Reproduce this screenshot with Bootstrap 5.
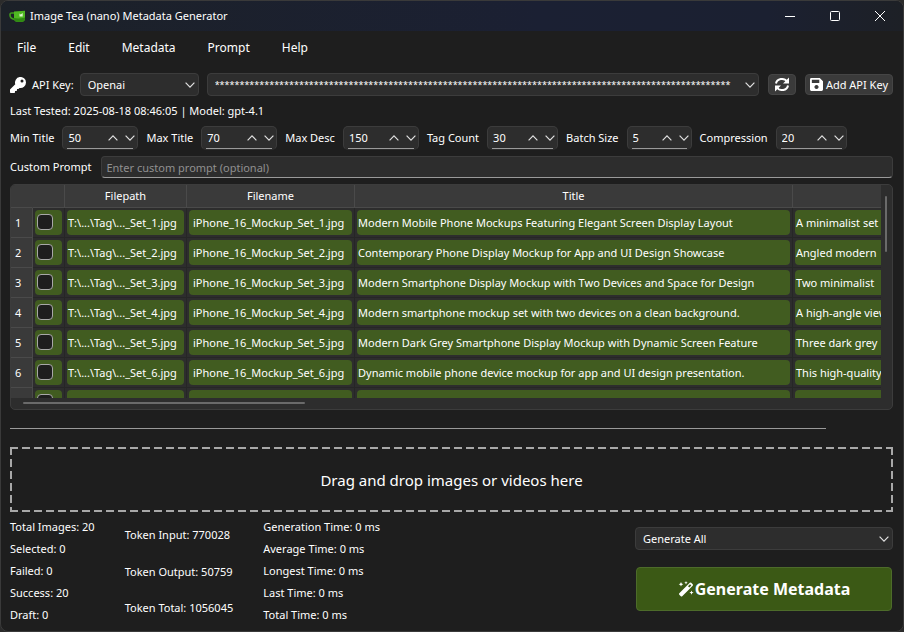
<!DOCTYPE html>
<html lang="en" data-bs-theme="dark">
<head>
<meta charset="utf-8">
<meta name="viewport" content="width=device-width, initial-scale=1">
<title>Image Tea (nano) Metadata Generator</title>
<link href="https://cdn.jsdelivr.net/npm/bootstrap@5.3.0/dist/css/bootstrap.min.css" rel="stylesheet">
<style>
  :root {
    --win: #1e1e1e;
    --field: #2d2d2d;
    --edge: #3c3c3c;
    --head: #3a3a3a;
    --cell: #415c20;
    --chev: url("data:image/svg+xml,%3Csvg xmlns='http://www.w3.org/2000/svg' viewBox='0 0 10 6' fill='none' stroke='%23e0e0e0' stroke-width='1.2'%3E%3Cpath d='M.6.7 5 5.1 9.4.7'/%3E%3C/svg%3E");
  }
  html { background: #2b2b2b; }
  body { font-family: "Noto Sans", "Open Sans", sans-serif; font-size: 11px; line-height: 16px; color: #fff; background: transparent; }
  .app-window { min-height: 100vh; background: var(--win); border: 1px solid #3a3a3a; border-radius: 8px; overflow: hidden; }
  .title-bar { height: 30px; padding-left: 8px; background: linear-gradient(90deg, #1c2128, #1b2033 60%, #1b2031 85%, #1d2026); }
  .win-btn { width: 45px; height: 30px; padding: 0 2px 2px 0; border: 0; color: #fff; background: none; }
  .menu-row { height: 33px; padding-left: 16px; gap: 32px; font-size: 12px; }
  .menu-row a { color: #fff; text-decoration: none; }
  .content { padding: 9px 10px 8px 9px; }
  .combo, .combo:focus { height: 23px; padding: 0 20px 0 7px; font-size: 11px; line-height: 16px; color: #fff; border: 1px solid var(--edge); border-radius: 4px; box-shadow: none;
    background: var(--field) var(--chev) no-repeat right 3px center / 10px 6px; }
  .provider { width: 119px; }
  .key-combo, .key-combo:focus { min-width: 0; padding-right: 16px; font-size: 9px; }
  .key-glyph { width: 16px; height: 16px; flex: none; }
  .provider-label { margin: 0 6px; }
  .tool-btn { height: 21px; margin-left: 9px; padding: 0 4px; gap: 3px; font-size: 11px; line-height: 16px; color: #fff; background: #3a3a3a; border: 1px solid #454545; border-radius: 4px; }
  .tool-btn:hover { background: #444; color: #fff; }
  .refresh-btn { width: 28px; }
  .last-test { margin-top: 7px; }
  .spin-row { column-gap: 8px; margin-top: 7px; }
  .spin-set { gap: 8px; }
  .spin { width: 76px; height: 24px; gap: 3px; padding: 0 0 0 5px; border: 1px solid var(--edge); border-radius: 5px; background: linear-gradient(#9a9a9a, #9a9a9a) no-repeat center bottom / calc(100% - 8px) 1px, var(--field); border-bottom-color: transparent; }
  .spin-md { width: 71px; }
  .spin-sm { width: 65px; }
  .spin input { width: 0; flex: 1; padding: 0; border: 0; outline: 0; color: #fff; background: none; appearance: textfield; }
  .spin input::-webkit-inner-spin-button { appearance: none; margin: 0; }
  .spin button { width: 14px; padding: 0 2px; border: 0; background: none; line-height: 0; color: #e0e0e0; }
  .prompt-row { gap: 10px; margin-top: 6px; }
  .prompt-field, .prompt-field:focus { height: 22px; padding: 0 4px; font-size: 11px; color: #fff; border: 1px solid var(--edge); border-bottom: 1px solid #9a9a9a; border-radius: 4px; background: var(--field); box-shadow: none; }
  .prompt-field::placeholder { color: #909090; }
  .grid-frame { margin-top: 6px; border: 1px solid var(--edge); border-radius: 5px; background: var(--field); height: 226px; flex-grow: 1; display: grid; grid-template: 1fr 11px / 1fr 11px; overflow: hidden; }
  .grid-view { overflow: hidden; min-width: 0; min-height: 0; }
  .data-grid { table-layout: fixed; width: 1100px; border-collapse: separate; border-spacing: 0; background: var(--field); }
  .data-grid th { font-weight: 400; text-align: center; background: var(--head); border-right: 1px solid #4a4a4a; border-bottom: 1px solid #4a4a4a; padding: 0; }
  .data-grid thead th { height: 23px; }
  .data-grid thead .no-edge { border-right-color: var(--head); }
  .data-grid tbody th { text-align: left; padding-left: 4px; }
  .data-grid td { height: 30px; padding: 2px; border-right: 1px solid #262626; border-bottom: 1px solid #262626; }
  .fill-cell { height: 25px; border-radius: 4px; background: var(--cell); padding: 5px 1px 4px; line-height: 16px; white-space: nowrap; overflow: hidden; }
  .fill-cell.file-name { padding-left: 4px; }
  .fill-cell.tick-cell { padding: 4px 2px; }
  .row-tick { appearance: none; display: block; width: 16px; height: 16px; margin: 0; border: 1px solid #a8a8a8; border-radius: 4px; background: #1e1e1e; }
  .row-tick:checked { background: #8bc34a; }
  .v-track { padding: 11px 0 0 4px; }
  .v-thumb { width: 2px; height: 56px; border-radius: 1px; background: #6a6a6a; }
  .h-track { padding: 4px 0 0 12px; }
  .h-thumb { width: 282px; height: 2px; border-radius: 1px; background: #6a6a6a; }
  .rule { margin: 18px 67px 18px 0; height: 1px; background: #9a9a9a; }
  .drop-zone { height: 65px; font-size: 15px;
    --dash-x: repeating-linear-gradient(90deg, #a8a8a8 0 8px, transparent 8px 12px);
    --dash-y: repeating-linear-gradient(#a8a8a8 0 8px, transparent 8px 12px);
    background: var(--dash-x) 0 0 / 100% 2px no-repeat, var(--dash-x) 0 100% / 100% 2px no-repeat, var(--dash-y) 0 0 / 2px 100% no-repeat, var(--dash-y) 100% 0 / 2px 100% no-repeat; }
  .stats { padding-top: 7px; }
  .stat-sets { gap: 30px; }
  .stat-list { gap: 6px; }
  .token-list { padding: 8px 0 7px; }
  .actions { width: 258px; padding-top: 8px; }
  .go-btn { height: 44px; margin: 17px 1px 0; font-size: 16px; font-weight: 700; gap: 1px; padding: 0; color: #fff; background: #3b5915; border: 1px solid #4d6b2a; border-radius: 4px; }
  .go-btn:hover { color: #fff; background: #45681a; }
</style>
</head>
<body>
<div class="app-window d-flex flex-column">
  <header class="title-bar d-flex align-items-center">
    <svg width="17" height="13" viewBox="0 0 17 13" class="me-1" aria-hidden="true"><path d="M5.500 3H2.500Q1 3 1 5q0 4 5.500 4.500" fill="none" stroke="#3f9a1c" stroke-width="1.600"/><path d="M5 1.500 16 .8v7.700q0 3-3 3.300H8Q5 11.500 5 8.500z" fill="#4fb822"/><path d="M5 8q5 1 11-.5v1q0 3-3 3.300H8Q5 11.500 5 8.500z" fill="#2f8a12"/><path d="m10.500 3.500 1.200 1 2-1.500v3.500h-3.200z" fill="#dff5cf"/></svg>
    <span class="flex-grow-1">Image Tea (nano) Metadata Generator</span>
    <button class="win-btn" type="button" aria-label="Minimize"><svg width="10" height="10" viewBox="0 0 10 10"><path d="M0 5.500h10" stroke="currentColor"/></svg></button>
    <button class="win-btn" type="button" aria-label="Maximize"><svg width="10" height="10" viewBox="0 0 10 10"><rect x=".5" y=".5" width="9" height="9" rx="1" fill="none" stroke="currentColor"/></svg></button>
    <button class="win-btn" type="button" aria-label="Close"><svg width="10" height="10" viewBox="0 0 10 10"><path d="m0 0 10 10M10 0 0 10" stroke="currentColor"/></svg></button>
  </header>
  <nav class="menu-row d-flex align-items-center">
    <a href="#">File</a><a href="#">Edit</a><a href="#">Metadata</a><a href="#">Prompt</a><a href="#">Help</a>
  </nav>
  <main class="content d-flex flex-column flex-grow-1">
    <div class="d-flex align-items-center text-nowrap">
      <svg class="key-glyph" viewBox="0 0 512 512" fill="#fff" aria-hidden="true"><path d="M512 176a176 176 0 0 1-209 173l-24 27a24 24 0 0 1-18 8h-37v40a24 24 0 0 1-24 24h-40v40a24 24 0 0 1-24 24H24a24 24 0 0 1-24-24v-78a24 24 0 0 1 7-17l162-162A176 176 0 1 1 512 176zM336 128a48 48 0 1 0 96 0 48 48 0 1 0-96 0z"/></svg>
      <label for="provider" class="provider-label flex-shrink-0">API Key:</label>
      <select id="provider" class="form-select combo provider me-2 flex-shrink-0"><option>Openai</option></select>
      <select class="form-select combo key-combo flex-fill w-auto" aria-label="Stored key"><option>********************************************************************************************************</option></select>
      <button class="btn tool-btn refresh-btn flex-shrink-0 d-flex align-items-center justify-content-center" type="button" aria-label="Refresh"><svg width="16" height="15" viewBox="0 0 16 15" fill="none" stroke="#fff" stroke-width="2"><path d="M2 6.500A6 5.500 0 0 1 13 4.500M14 8.500A6 5.500 0 0 1 3 10.500"/><path d="M15 .5v6H9zM1 14.500v-6h6z" fill="#fff" stroke="none"/></svg></button>
      <button class="btn tool-btn flex-shrink-0 d-flex align-items-center" type="button"><svg width="13" height="13" viewBox="0 0 14 14"><path fill="#fff" fill-rule="evenodd" d="M1.500 0H10.500L14 3.500v9q0 1.500-1.500 1.500h-11Q0 14 0 12.500v-11Q0 0 1.500 0zM2 2v3.500h8V2zM7 7.500a2.200 2.200 0 1 0 .01 0z"/></svg>Add API Key</button>
    </div>
    <div class="last-test">Last Tested: 2025-08-18 08:46:05 | Model: gpt-4.1</div>
    <form class="spin-row d-flex flex-wrap" id="limits"></form>
    <div class="prompt-row d-flex align-items-center">
      <label for="prompt" class="text-nowrap">Custom Prompt</label>
      <input id="prompt" class="form-control prompt-field" type="text" placeholder="Enter custom prompt (optional)">
    </div>
    <div class="grid-frame">
      <div class="grid-view">
        <table class="data-grid">
          <colgroup><col style="width:22px"><col style="width:32px"><col style="width:122px"><col style="width:168px"><col style="width:438px"><col></colgroup>
          <thead><tr><th class="no-edge"></th><th></th><th>Filepath</th><th>Filename</th><th>Title</th><th></th></tr></thead>
          <tbody id="rows"></tbody>
        </table>
      </div>
      <div class="v-track"><div class="v-thumb"></div></div>
      <div class="h-track"><div class="h-thumb"></div></div>
    </div>
    <div class="rule"></div>
    <div class="drop-zone d-flex align-items-center justify-content-center">Drag and drop images or videos here</div>
    <div class="stats d-flex justify-content-between">
      <div class="stat-sets d-flex text-nowrap">
        <div class="stat-list d-flex flex-column"><span>Total Images: 20</span><span>Selected: 0</span><span>Failed: 0</span><span>Success: 20</span><span>Draft: 0</span></div>
        <div class="token-list d-flex flex-column justify-content-between"><span>Token Input: 770028</span><span>Token Output: 50759</span><span>Token Total: 1056045</span></div>
        <div class="stat-list d-flex flex-column"><span>Generation Time: 0 ms</span><span>Average Time: 0 ms</span><span>Longest Time: 0 ms</span><span>Last Time: 0 ms</span><span>Total Time: 0 ms</span></div>
      </div>
      <div class="actions d-flex flex-column">
        <select class="form-select combo" aria-label="Scope"><option>Generate All</option></select>
        <button class="btn go-btn d-flex align-items-center justify-content-center" type="button"><svg width="16" height="16" viewBox="0 0 16 16" fill="#fff" aria-hidden="true"><path fill-rule="evenodd" d="M1.300 12.300 11.800 1.800q.7-.7 1.400 0l1.500 1.500q.7.7 0 1.400L4.200 15.200q-.7.7-1.400 0l-1.500-1.500q-.7-.7 0-1.400zM10 5.300l1.300 1.300 2-2L12 3.300z"/><path d="m3 1 .7 1.600L5.300 3.300 3.700 4 3 5.600 2.300 4 .7 3.300l1.600-.7zM8 0l.5 1.200 1.200.5-1.200.5L8 3.400l-.5-1.200-1.200-.5 1.200-.5zM13.500 9.500l.6 1.500 1.500.6-1.500.6-.6 1.500-.6-1.500-1.500-.6 1.500-.6z"/></svg>Generate Metadata</button>
      </div>
    </div>
  </main>
</div>
<script>
  const limits = [["Min Title", 50, ""], ["Max Title", 70, ""], ["Max Desc", 150, ""], ["Tag Count", 30, "spin-md"], ["Batch Size", 5, "spin-sm"], ["Compression", 20, "spin-md"]];
  document.getElementById("limits").innerHTML = limits.map(([name, value, size], i) => `
    <div class="spin-set d-flex align-items-center"><label for="lim${i}">${name}</label>
      <div class="spin d-flex align-items-center ${size}"><input id="lim${i}" type="number" value="${value}">
        <button type="button" aria-label="Increase ${name}"><svg width="10" height="6" viewBox="0 0 10 6" fill="none" stroke="currentColor" stroke-width="1.200"><path d="M.6 5.300 5 .9l4.400 4.400"/></svg></button>
        <button type="button" aria-label="Decrease ${name}"><svg width="10" height="6" viewBox="0 0 10 6" fill="none" stroke="currentColor" stroke-width="1.200"><path d="M.6.7 5 5.100 9.400.7"/></svg></button>
      </div></div>`).join("");
  const files = [
    ["Modern Mobile Phone Mockups Featuring Elegant Screen Display Layout", "A minimalist set"],
    ["Contemporary Phone Display Mockup for App and UI Design Showcase", "Angled modern"],
    ["Modern Smartphone Display Mockup with Two Devices and Space for Design", "Two minimalist"],
    ["Modern smartphone mockup set with two devices on a clean background.", "A high-angle view"],
    ["Modern Dark Grey Smartphone Display Mockup with Dynamic Screen Feature", "Three dark grey"],
    ["Dynamic mobile phone device mockup for app and UI design presentation.", "This high-quality"],
    ["", ""]];
  document.getElementById("rows").innerHTML = files.map(([title, text], i) => {
    const n = i + 1, named = title !== "";
    return `<tr><th>${named ? n : ""}</th>
      <td><div class="fill-cell tick-cell"><input class="row-tick" type="checkbox" aria-label="Select row ${n}"></div></td>
      <td><div class="fill-cell">${named ? `T:\\...\\Tag\\..._Set_${n}.jpg` : ""}</div></td>
      <td><div class="fill-cell file-name">${named ? `iPhone_16_Mockup_Set_${n}.jpg` : ""}</div></td>
      <td><div class="fill-cell">${title}</div></td><td><div class="fill-cell">${text}</div></td></tr>`;
  }).join("");
</script>
<script src="https://cdn.jsdelivr.net/npm/bootstrap@5.3.0/dist/js/bootstrap.bundle.min.js"></script>
</body>
</html>
